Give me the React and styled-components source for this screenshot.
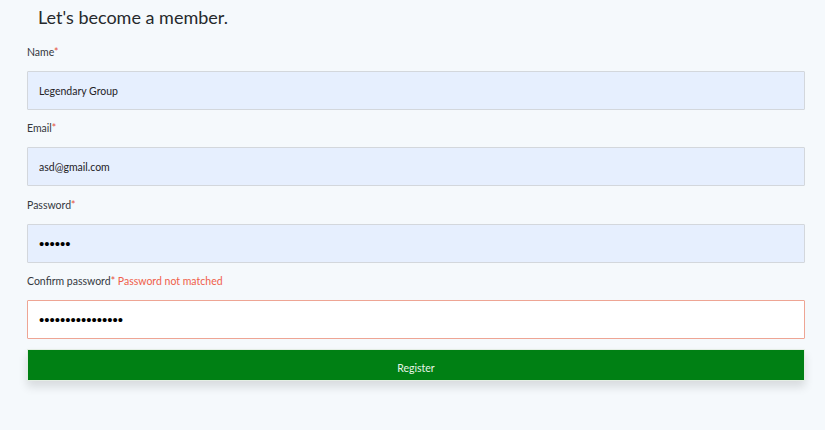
import React from 'react';
import styled, { createGlobalStyle } from 'styled-components';

const Global = createGlobalStyle`
  html, body {
    margin: 0;
    background: #f5f9fc;
    font-family: "Lato", "Open Sans", sans-serif;
  }
`;

const fields = [
  { id: 'name', label: 'Name', type: 'text', value: 'Legendary Group' },
  { id: 'email', label: 'Email', type: 'email', value: 'asd@gmail.com' },
  { id: 'password', label: 'Password', type: 'password', value: '123456' },
  { id: 'confirm', label: 'Confirm password', type: 'password', value: '1234567890123456', error: 'Password not matched' },
];

const App = () => {
  return (
    <>
      <Global />
      <Page>
        <Title>Let's become a member.</Title>
        <form onSubmit={(e) => e.preventDefault()}>
          {fields.map((f) => (
            <Field key={f.id}>
              <Label htmlFor={f.id}>
                {f.label}<Star>*</Star>
                {f.error && <ErrorText> {f.error}</ErrorText>}
              </Label>
              <Input id={f.id} type={f.type} defaultValue={f.value} $invalid={!!f.error} />
            </Field>
          ))}
          <Button type="submit">Register</Button>
        </form>
      </Page>
    </>
  );
};

const Page = styled.div`
  padding: 5px 20px 40px 27px;
  min-height: 430px;
  box-sizing: border-box;
`;

const Title = styled.h2`
  margin: 0 0 15px 11px;
  font-size: 18px;
  font-weight: 400;
  color: #26292c;
  line-height: 24px;
`;

const Field = styled.div`
  display: flex;
  flex-direction: column;
  gap: 11px;
  margin-bottom: 10.4px;
`;

const Label = styled.label`
  font-size: 10.5px;
  line-height: 16px;
  color: #34383c;
`;

const Star = styled.span`
  color: #e5533d;
`;

const ErrorText = styled.span`
  color: #f0604a;
`;

const Input = styled.input`
  box-sizing: border-box;
  width: 100%;
  height: 39px;
  padding: 0 11px;
  font-family: inherit;
  font-size: 10.5px;
  color: #1f2226;
  background: ${(p) => (p.$invalid ? '#ffffff' : '#e6effe')};
  border: 1px solid ${(p) => (p.$invalid ? '#eea594' : '#d3d7dc')};
  border-radius: 1px;
  outline: none;
  &[type='password'] {
    font-family: "Liberation Sans", Arial, sans-serif;
    font-size: 15px;
    color: #000;
  }
`;

const Button = styled.button`
  display: block;
  width: 100%;
  height: 32px;
  margin-top: -1px;
  padding: 6px 0 0;
  border: 1px solid #e4eee4;
  background: #008014;
  color: #e8f4e8;
  font-family: inherit;
  font-size: 10.5px;
  box-shadow: 0 6px 10px rgba(0, 0, 0, 0.12);
  cursor: pointer;
`;

export default App;
